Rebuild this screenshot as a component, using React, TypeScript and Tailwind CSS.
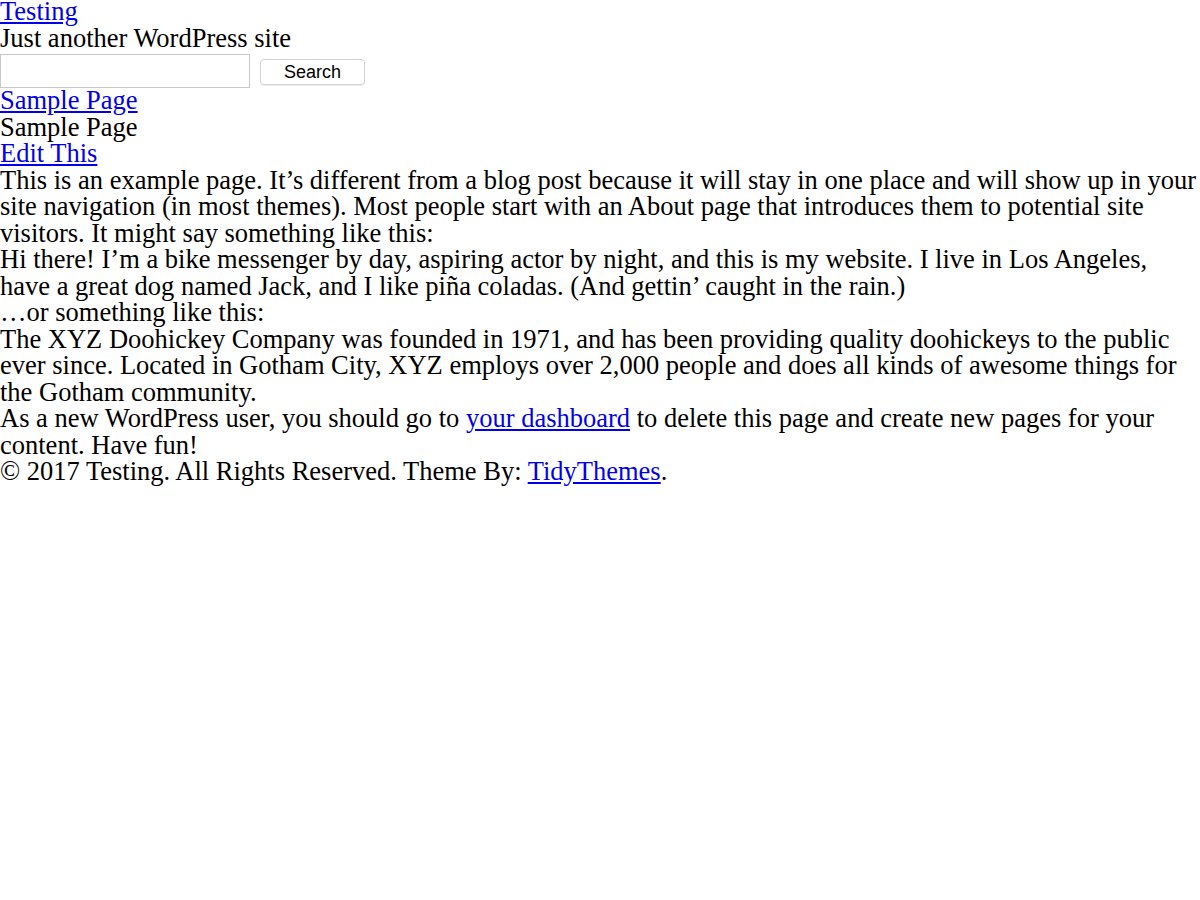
export default function App() {
  const link = "text-[#0000ee] underline";
  return (
    <div className="min-h-[900px] bg-white text-black font-['Liberation_Serif','Times_New_Roman',serif] text-[26.5px] leading-[26.5px]">
      <header className="-mt-[2px]">
        <div>
          <a href="#" className={link}>Testing</a>
        </div>
        <div>Just another WordPress site</div>
        <form className="flex h-[36px] items-start gap-[10px] pt-[3px]" onSubmit={(e) => e.preventDefault()}>
          <input
            type="text"
            className="h-[34px] w-[250px] border border-[#c8c8c8] bg-white px-1 text-[16px]"
          />
          <button
            type="submit"
            className="mt-[5px] h-[26px] w-[105px] rounded-[4px] border border-[#d4d4d4] bg-white font-['Liberation_Sans',Arial,sans-serif] text-[18px] leading-none text-black shadow-[0_1px_1px_rgba(0,0,0,0.08)]"
          >
            Search
          </button>
        </form>
        <nav>
          <a href="#" className={link}>Sample Page</a>
        </nav>
      </header>
      <main>
        <div>Sample Page</div>
        <div>
          <a href="#" className={link}>Edit This</a>
        </div>
        <p>
          This is an example page. It’s different from a blog post because it will stay in one place and will show up in your site navigation (in most themes). Most people start with an About page that introduces them to potential site visitors. It might say something like this:
        </p>
        <p>
          Hi there! I’m a bike messenger by day, aspiring actor by night, and this is my website. I live in Los Angeles, have a great dog named Jack, and I like piña coladas. (And gettin’ caught in the rain.)
        </p>
        <p>…or something like this:</p>
        <p>
          The XYZ Doohickey Company was founded in 1971, and has been providing quality doohickeys to the public ever since. Located in Gotham City, XYZ employs over 2,000 people and does all kinds of awesome things for the Gotham community.
        </p>
        <p>
          As a new WordPress user, you should go to <a href="#" className={link}>your dashboard</a> to delete this page and create new pages for your content. Have fun!
        </p>
      </main>
      <footer>
        © 2017 Testing. All Rights Reserved. Theme By: <a href="#" className={link}>TidyThemes</a>.
      </footer>
    </div>
  );
}
